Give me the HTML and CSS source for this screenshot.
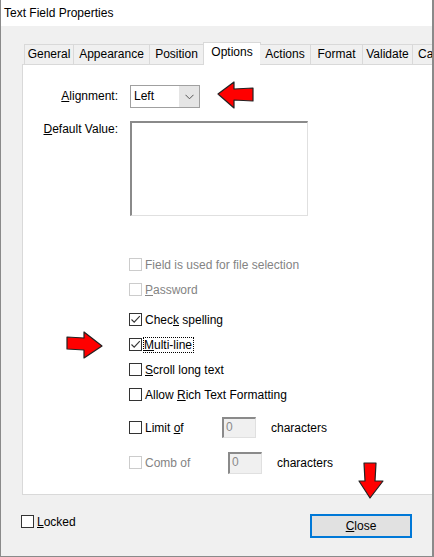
FILE: index.html
```html
<!DOCTYPE html>
<html>
<head>
<meta charset="utf-8">
<link rel="stylesheet" href="styles.css">
</head>
<body>
<div class="window">
  <div class="titlebar">Text Field Properties</div>
  <div class="client">
    <div class="tabs">
      <div class="tab t-general">General</div>
      <div class="tab t-appearance">Appearance</div>
      <div class="tab t-position">Position</div>
      <div class="tab t-options selected">Options</div>
      <div class="tab t-actions">Actions</div>
      <div class="tab t-format">Format</div>
      <div class="tab t-validate">Validate</div>
      <div class="tab t-calc">Calculate</div>
    </div>
    <div class="panel">
      <div class="form">
        <div class="label lbl-align"><u>A</u>lignment:</div>
        <div class="select">
          <span class="select-value">Left</span>
          <span class="select-btn">
            <svg width="9" height="6" viewBox="0 0 9 6"><path d="M0.5 0.8 L4.5 4.8 L8.5 0.8" fill="none" stroke="#555" stroke-width="1"/></svg>
          </span>
        </div>
        <div class="label lbl-default"><u>D</u>efault Value:</div>
        <div class="textarea"></div>
      </div>

      <div class="checks">
        <div class="row disabled r-file"><span class="cb"></span><span class="txt">Field is used for file selection</span></div>
        <div class="row disabled r-pass"><span class="cb"></span><span class="txt"><u>P</u>assword</span></div>
        <div class="row r-spell"><span class="cb checked"><svg width="11" height="11" viewBox="0 0 11 11"><path d="M1.5 5.5 L4.2 8.2 L9.8 2.2" fill="none" stroke="#333" stroke-width="1.1"/></svg></span><span class="txt">Chec<u>k</u> spelling</span></div>
        <div class="row r-multi"><span class="cb checked"><svg width="11" height="11" viewBox="0 0 11 11"><path d="M1.5 5.5 L4.2 8.2 L9.8 2.2" fill="none" stroke="#333" stroke-width="1.1"/></svg></span><span class="txt focus"><u>M</u>ulti-line</span></div>
        <div class="row r-scroll"><span class="cb"></span><span class="txt"><u>S</u>croll long text</span></div>
        <div class="row r-rich"><span class="cb"></span><span class="txt">Allow <u>R</u>ich Text Formatting</span></div>
        <div class="row r-limit"><span class="cb"></span><span class="txt w-limit">Limit <u>o</u>f</span><span class="num">0</span><span class="chars">characters</span></div>
        <div class="row r-comb"><span class="cb dis"></span><span class="txt w-comb dis-txt">Comb of</span><span class="num">0</span><span class="chars">characters</span></div>
      </div>
    </div>
    <div class="footer">
      <div class="locked"><span class="cb"></span><span class="txt"><u>L</u>ocked</span></div>
      <div class="btn"><u>C</u>lose</div>
    </div>
  </div>

  <svg class="arrow arrow-left" width="40" height="32" viewBox="0 0 40 32">
    <path d="M2 14 L18 2 L18 9 L37 8 L37 21 L18 20 L18 28 Z" fill="#f00" stroke="#222" stroke-width="1.2" stroke-linejoin="round"/>
  </svg>
  <svg class="arrow arrow-right" width="40" height="30" viewBox="0 0 40 30">
    <path d="M38 15 L20 1 L20 7 L3 6 L3 18 L20 19 L20 27 Z" fill="#f00" stroke="#222" stroke-width="1.2" stroke-linejoin="round"/>
  </svg>
  <svg class="arrow arrow-down" width="28" height="40" viewBox="0 0 28 40">
    <path d="M12 37 L1 20 L7 20 L6 2 L18 2 L17 20 L25 20 Z" fill="#f00" stroke="#222" stroke-width="1.2" stroke-linejoin="round"/>
  </svg>
</div>
</body>
</html>
```

FILE: styles.css
```css
html, body {
  margin: 0;
  padding: 0;
  background: #ffffff;
}

body {
  font-family: "Liberation Sans", Arial, sans-serif;
  font-size: 12px;
  color: #000;
}

u {
  text-decoration: underline;
  text-underline-offset: 1px;
}

.window {
  position: relative;
  width: 434px;
  height: 557px;
  box-sizing: border-box;
  border-left: 1px solid #8a8a8a;
  border-right: 2px solid #8a8a8a;
  border-bottom: 1px solid #8a8a8a;
  overflow: hidden;
  display: flex;
  flex-direction: column;
}

.titlebar {
  height: 26px;
  line-height: 26px;
  padding-left: 3px;
  background: #ffffff;
  flex: none;
}

.client {
  flex: 1;
  background: #f0f0f0;
  padding-left: 21px;
  padding-top: 17px;
  display: flex;
  flex-direction: column;
}

.tabs {
  display: flex;
  align-items: flex-end;
  padding-left: 2px;
  height: 21px;
  position: relative;
  z-index: 2;
}

.tab {
  height: 20px;
  box-sizing: border-box;
  border: 1px solid #d9d9d9;
  border-bottom: none;
  border-left: none;
  background: #f0f0f0;
  line-height: 19px;
  text-align: center;
  white-space: nowrap;
  flex: none;
}

.t-general { width: 50px; border-left: 1px solid #d9d9d9; }
.t-appearance { width: 76px; }
.t-position { width: 54px; }
.t-options { width: 56px; }
.t-actions { width: 51px; }
.t-format { width: 52px; }
.t-validate { width: 50px; }
.t-calc { width: 60px; text-align: left; padding-left: 5px; }

.tab.selected {
  height: 23px;
  background: #ffffff;
  border-left: 1px solid #d9d9d9;
  margin-left: -1px;
  margin-right: -1px;
  width: 58px;
  line-height: 18px;
  margin-bottom: -1px;
}

.panel {
  width: 430px;
  height: 431px;
  box-sizing: border-box;
  background: #ffffff;
  border: 1px solid #d9d9d9;
  flex: none;
}

.form {
  display: grid;
  grid-template-columns: 95px 178px;
  column-gap: 12px;
  row-gap: 13px;
  margin-top: 20px;
}

.label {
  text-align: right;
}

.lbl-align {
  line-height: 23px;
}

.lbl-default {
  line-height: 16px;
}

.select {
  width: 70px;
  height: 23px;
  box-sizing: border-box;
  border: 1px solid #a0a0a0;
  display: flex;
  background: #ffffff;
}

.select-value {
  flex: 1;
  padding-left: 3px;
  line-height: 21px;
}

.select-btn {
  width: 20px;
  background: #e5e5e5;
  display: flex;
  align-items: center;
  justify-content: center;
}

.textarea {
  width: 178px;
  height: 95px;
  box-sizing: border-box;
  border-top: 2px solid #8a8a8a;
  border-left: 2px solid #8a8a8a;
  border-right: 1px solid #e0e0e0;
  border-bottom: 1px solid #e0e0e0;
  background: #ffffff;
}

.checks {
  margin-left: 106px;
  margin-top: 36px;
  display: flex;
  flex-direction: column;
}

.row {
  display: flex;
  align-items: center;
  height: 25px;
}

.r-spell { margin-top: 5px; }
.r-limit { margin-top: 8px; }
.r-comb { margin-top: 10px; }

.cb {
  width: 13px;
  height: 13px;
  box-sizing: border-box;
  border: 1px solid #333333;
  background: #ffffff;
  flex: none;
  display: flex;
  align-items: center;
  justify-content: center;
}

.row.disabled .cb,
.cb.dis {
  border-color: #cccccc;
}

.row.disabled .txt,
.dis-txt {
  color: #838383;
}

.txt {
  margin-left: 3px;
  white-space: nowrap;
}

.focus {
  outline: 1px dotted #000;
  outline-offset: 0px;
  padding: 0 1px 0 0;
  margin-left: 2px;
  line-height: 14px;
}

.w-limit { width: 77px; }
.w-comb { width: 83px; }

.num {
  width: 34px;
  height: 21px;
  box-sizing: border-box;
  border-top: 2px solid #8a8a8a;
  border-left: 2px solid #8a8a8a;
  border-right: 1px solid #e0e0e0;
  border-bottom: 1px solid #e0e0e0;
  background: #f0f0f0;
  color: #8a8a8a;
  padding-left: 2px;
  line-height: 17px;
  flex: none;
}

.r-comb .num {
  height: 22px;
}

.chars {
  margin-left: 15px;
}

.footer {
  display: flex;
  justify-content: space-between;
  align-items: flex-start;
  padding-top: 19px;
  padding-right: 20px;
}

.locked {
  display: flex;
  align-items: center;
  margin-left: -1px;
  height: 15px;
}

.btn {
  width: 102px;
  height: 24px;
  box-sizing: border-box;
  border: 2px solid #0078d7;
  background: #e1e1e1;
  text-align: center;
  line-height: 20px;
}

.arrow {
  position: absolute;
}

.arrow-left { left: 215px; top: 80px; }
.arrow-right { left: 63px; top: 331px; }
.arrow-down { left: 357px; top: 461px; }
```
